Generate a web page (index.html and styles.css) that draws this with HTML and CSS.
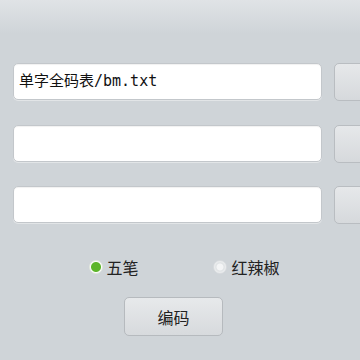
FILE: index.html
```html
<!DOCTYPE html>
<html>
<head>
<meta charset="utf-8">
<link rel="stylesheet" href="styles.css">
</head>
<body>
<div class="page">
  <div class="rows">
    <div class="row">
      <div class="field">单字全码表/bm.txt</div>
      <div class="side-btn"></div>
    </div>
    <div class="row">
      <div class="field"></div>
      <div class="side-btn"></div>
    </div>
    <div class="row">
      <div class="field"></div>
      <div class="side-btn"></div>
    </div>
  </div>
  <div class="radios">
    <label class="radio"><span class="dot on"></span><span class="rlabel">五笔</span></label>
    <label class="radio second"><span class="dot"></span><span class="rlabel">红辣椒</span></label>
  </div>
  <div class="actions">
    <div class="btn">编码</div>
  </div>
</div>
</body>
</html>
```

FILE: styles.css
```css
html, body {
  margin: 0;
  padding: 0;
  width: 360px;
  height: 360px;
  overflow: hidden;
}
body {
  background: linear-gradient(to bottom, #e0e3e6 0px, #cfd4d8 34px, #cfd4d8 100%);
  font-family: "Noto Sans CJK SC", "DejaVu Sans", sans-serif;
  color: #222;
}
.page {
  padding-top: 63px;
}
.rows {
  display: flex;
  flex-direction: column;
  gap: 23.5px;
  padding-left: 13px;
}
.row {
  display: flex;
  align-items: flex-start;
  gap: 12px;
  height: 38px;
}
.field {
  box-sizing: border-box;
  width: 309px;
  height: 37px;
  flex: none;
  background: #fff;
  border: 1px solid #c3c7cb;
  border-radius: 5px;
  box-shadow: inset 0 1px 1px rgba(0,0,0,0.06), 0 1px 0 rgba(255,255,255,0.4);
  padding-left: 5px;
  font-family: "DejaVu Sans Mono", "Noto Sans CJK SC", monospace;
  font-size: 15px;
  line-height: 35px;
  color: #111;
  white-space: nowrap;
}
.side-btn {
  box-sizing: border-box;
  width: 40px;
  height: 38px;
  flex: none;
  border: 1px solid #b9bdc1;
  border-radius: 5px;
  background: linear-gradient(to bottom, #e6e8ea, #d6d9dc);
}
.radios {
  display: flex;
  align-items: center;
  margin-top: 32.5px;
  padding-left: 88.5px;
  height: 20px;
}
.radio {
  display: flex;
  align-items: center;
  gap: 4px;
  font-size: 16px;
  line-height: 20px;
}
.radio.second {
  margin-left: 74px;
  gap: 5px;
}
.dot {
  box-sizing: border-box;
  width: 14px;
  height: 14px;
  border-radius: 50%;
  background: radial-gradient(circle, #f4f5f6 0 3px, #dfe2e4 4px, #eef0f1 6px);
  border: 1px solid #d8dbde;
}
.dot.on {
  background: radial-gradient(circle, #5db52a 0 4.5px, #fff 5.5px);
  border: 1px solid #e3e8df;
}
.actions {
  display: flex;
  padding-left: 124px;
  margin-top: 20.5px;
}
.btn {
  box-sizing: border-box;
  width: 99px;
  height: 39px;
  border: 1px solid #b6babe;
  border-radius: 5px;
  background: linear-gradient(to bottom, #e7e9eb, #d7dadd);
  display: flex;
  align-items: center;
  justify-content: center;
  font-size: 16px;
  color: #222;
}
```
